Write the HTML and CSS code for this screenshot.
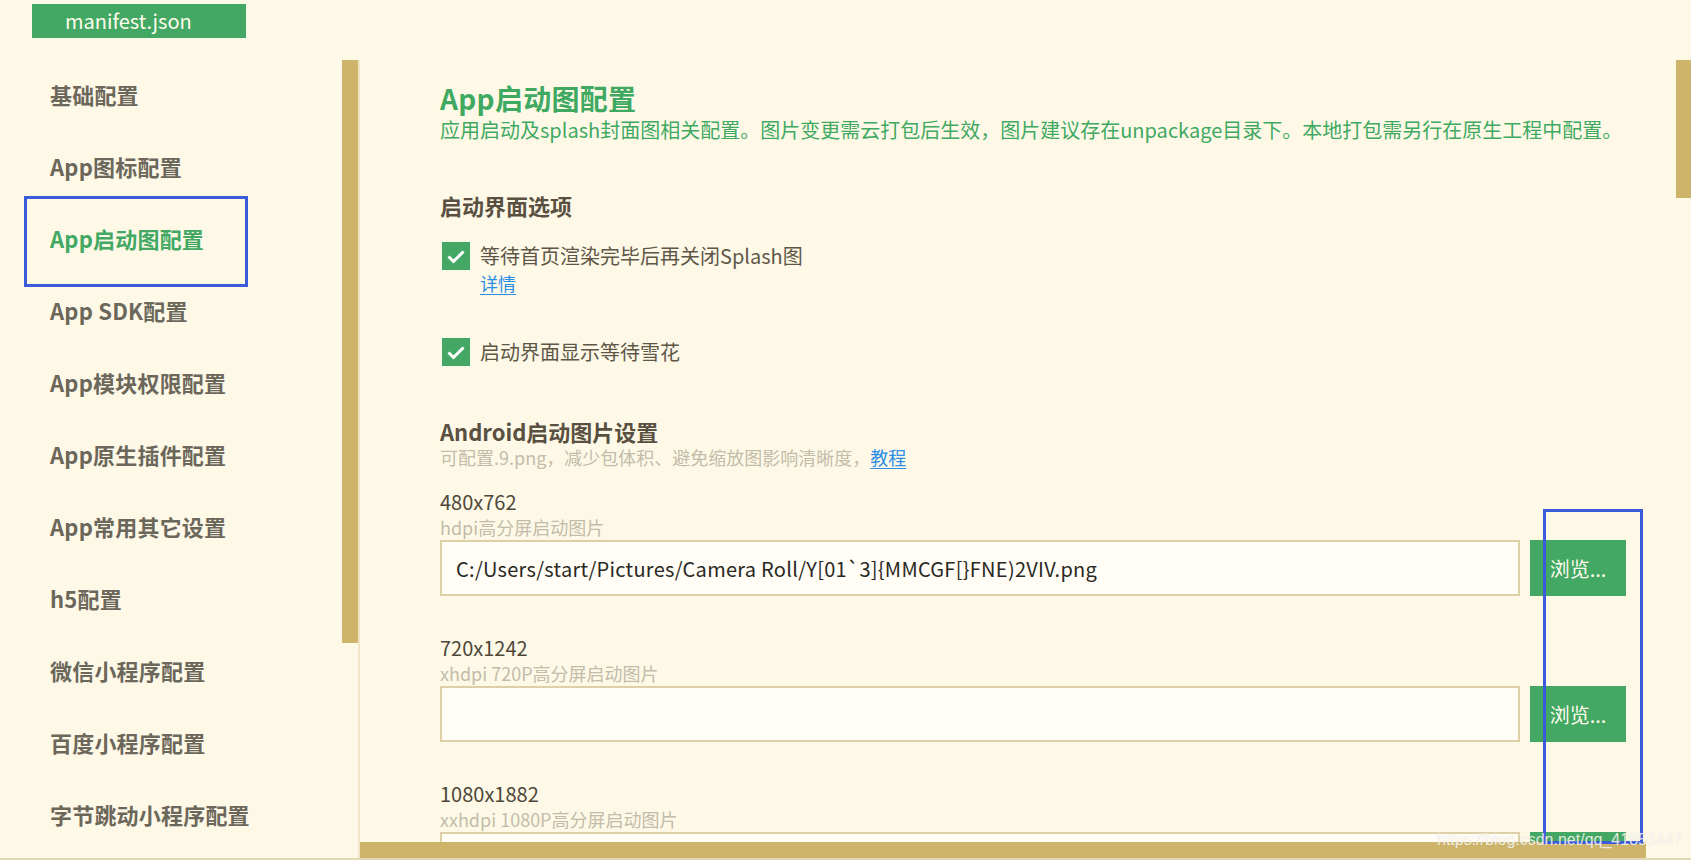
FILE: index.html
```html
<!DOCTYPE html>
<html lang="zh-CN">
<head>
<meta charset="utf-8">
<title>manifest.json - App启动图配置</title>
<link rel="stylesheet" href="styles.css">
</head>
<body>
<div class="app">
  <header class="tabs">
    <div class="tab">manifest.json</div>
  </header>
  <div class="workspace">
    <aside class="sidebar">
      <nav class="nav">
        <a class="nav-item">基础配置</a>
        <a class="nav-item">App图标配置</a>
        <a class="nav-item active">App启动图配置</a>
        <a class="nav-item">App SDK配置</a>
        <a class="nav-item">App模块权限配置</a>
        <a class="nav-item">App原生插件配置</a>
        <a class="nav-item">App常用其它设置</a>
        <a class="nav-item">h5配置</a>
        <a class="nav-item">微信小程序配置</a>
        <a class="nav-item">百度小程序配置</a>
        <a class="nav-item">字节跳动小程序配置</a>
      </nav>
      <div class="vscroll side-scroll"><div class="thumb"></div></div>
      <div class="annot annot-nav"></div>
    </aside>
    <section class="main">
      <div class="main-body">
        <div class="content">
          <h1 class="page-title">App启动图配置</h1>
          <p class="page-desc">应用启动及splash封面图相关配置。图片变更需云打包后生效，图片建议存在unpackage目录下。本地打包需另行在原生工程中配置。</p>

          <h2 class="section-title first">启动界面选项</h2>
          <div class="option">
            <span class="checkbox"><svg viewBox="0 0 28 28" width="28" height="28"><path d="M6.5 14.5 L11.5 19.5 L21.5 9.5" fill="none" stroke="#fff" stroke-width="3"/></svg></span>
            <span class="option-label">等待首页渲染完毕后再关闭Splash图</span>
          </div>
          <div class="option-link"><a class="link">详情</a></div>
          <div class="option second">
            <span class="checkbox"><svg viewBox="0 0 28 28" width="28" height="28"><path d="M6.5 14.5 L11.5 19.5 L21.5 9.5" fill="none" stroke="#fff" stroke-width="3"/></svg></span>
            <span class="option-label">启动界面显示等待雪花</span>
          </div>

          <h2 class="section-title android">Android启动图片设置</h2>
          <p class="section-desc">可配置.9.png，减少包体积、避免缩放图影响清晰度，<a class="link">教程</a></p>

          <div class="field">
            <div class="field-label">480x762</div>
            <div class="field-hint">hdpi高分屏启动图片</div>
            <div class="field-row">
              <input class="path-input" type="text" readonly value="C:/Users/start/Pictures/Camera Roll/Y[01`3]{MMCGF[}FNE)2VIV.png">
              <button class="browse">浏览...</button>
            </div>
          </div>
          <div class="field">
            <div class="field-label">720x1242</div>
            <div class="field-hint">xhdpi 720P高分屏启动图片</div>
            <div class="field-row">
              <input class="path-input" type="text" readonly value="">
              <button class="browse">浏览...</button>
            </div>
          </div>
          <div class="field">
            <div class="field-label">1080x1882</div>
            <div class="field-hint">xxhdpi 1080P高分屏启动图片</div>
            <div class="field-row">
              <input class="path-input" type="text" readonly value="">
              <button class="browse" aria-label="浏览..."></button>
            </div>
          </div>
        </div>
        <div class="vscroll main-scroll"><div class="thumb"></div></div>
      </div>
      <div class="hscroll"><div class="thumb"></div></div>
    </section>
  </div>
  <div class="bottom-line"></div>
  <div class="annot annot-btn"></div>
  <div class="watermark">https://blog.csdn.net/qq_41853447</div>
</div>
</body>
</html>
```
FILE: styles.css
```css
* { box-sizing: border-box; }

html, body {
  margin: 0;
  padding: 0;
  background: #fef9e7;
}

body {
  font-family: "Noto Sans CJK SC", sans-serif;
  color: #5e5747;
}

.app {
  position: relative;
  width: 1691px;
  height: 860px;
  overflow: hidden;
  display: flex;
  flex-direction: column;
  background: #fef9e7;
}

/* ---------- tab bar ---------- */
.tabs {
  height: 60px;
  padding: 4px 0 0 32px;
  flex: none;
}

.tab {
  width: 214px;
  height: 34px;
  line-height: 34px;
  padding-left: 33px;
  background: #42a863;
  color: #fffbec;
  font-size: 20px;
}

/* ---------- workspace ---------- */
.workspace {
  flex: 1;
  display: flex;
  min-height: 0;
}

.sidebar {
  position: relative;
  width: 360px;
  flex: none;
  display: flex;
  border-right: 2px solid #efe6c6;
}

.nav {
  flex: 1;
  display: flex;
  flex-direction: column;
  padding-left: 50px;
}

.nav-item {
  height: 72px;
  line-height: 68px;
  font-size: 22px;
  font-weight: 700;
  color: #6c675b;
  white-space: nowrap;
  letter-spacing: 0.2px;
}

.nav-item.active {
  color: #42a863;
}

.vscroll {
  flex: none;
}

.vscroll .thumb {
  background: #cdb46a;
}

.side-scroll {
  width: 16px;
}

.side-scroll .thumb {
  height: 583px;
}

.main {
  flex: 1;
  display: flex;
  flex-direction: column;
  min-width: 0;
}

.main-body {
  flex: 1;
  display: flex;
  min-height: 0;
}

.content {
  flex: 1;
  min-width: 0;
  overflow: hidden;
  padding: 20px 50px 0 80px;
}

.main-scroll {
  width: 15px;
}

.main-scroll .thumb {
  height: 138px;
}

.hscroll {
  height: 16px;
  flex: none;
}

.hscroll .thumb {
  width: 1286px;
  height: 16px;
  background: #cdb46a;
}

.bottom-line {
  height: 2px;
  flex: none;
  background: #e3d8b2;
}

/* ---------- content ---------- */
.page-title {
  margin: 0;
  font-size: 28px;
  line-height: 36px;
  font-weight: 700;
  color: #3fa962;
  letter-spacing: 0.3px;
}

.page-desc {
  margin: 0;
  font-size: 20px;
  line-height: 28px;
  color: #3fa962;
  white-space: nowrap;
}

.section-title {
  margin: 0;
  font-size: 22px;
  font-weight: 700;
  color: #5a5041;
}

.section-title.first {
  margin-top: 46px;
  line-height: 30px;
}

.section-title.android {
  margin-top: 51px;
  line-height: 28px;
}

.option {
  display: flex;
  align-items: center;
  gap: 10px;
  margin-top: 22px;
  padding-left: 2px;
  height: 28px;
}

.option.second {
  margin-top: 42px;
}

.checkbox {
  width: 28px;
  height: 28px;
  background: #42a863;
  display: block;
  flex: none;
}

.checkbox svg {
  display: block;
}

.option-label {
  font-size: 20px;
  line-height: 28px;
  color: #5e5747;
}

.option-link {
  padding-left: 40px;
  font-size: 18px;
  line-height: 26px;
}

.link {
  color: #2b8de6;
  text-decoration: underline;
  text-underline-offset: 3px;
}

.section-desc {
  margin: 0;
  font-size: 18px;
  line-height: 24px;
  color: #c3bca9;
}

.field {
  margin-top: 39px;
}

.section-desc + .field {
  margin-top: 20px;
}

.field-label {
  font-size: 20px;
  line-height: 26px;
  color: #4e4739;
}

.field-hint {
  font-size: 18px;
  line-height: 25px;
  color: #c3bca9;
  white-space: nowrap;
}

.field-row {
  display: flex;
  gap: 10px;
  height: 56px;
}

.path-input {
  flex: 1;
  min-width: 0;
  height: 56px;
  margin: 0;
  padding: 0 14px;
  border: 2px solid #ddd0a6;
  background: #fffdf5;
  font-family: "Noto Sans CJK SC", sans-serif;
  font-size: 20px;
  letter-spacing: 0.28px;
  color: #2a2824;
  outline: none;
}

.browse {
  width: 96px;
  height: 56px;
  flex: none;
  margin: 0;
  padding: 0;
  border: none;
  background: #42a863;
  color: #fffbec;
  font-family: "Noto Sans CJK SC", sans-serif;
  font-size: 20px;
}

/* ---------- overlays ---------- */
.annot {
  position: absolute;
  border: 3px solid #3b5bdb;
  pointer-events: none;
}

.annot-nav {
  left: 24px;
  top: 136px;
  width: 224px;
  height: 91px;
}

.annot-btn {
  left: 1543px;
  top: 509px;
  width: 100px;
  height: 335px;
}

.watermark {
  position: absolute;
  left: 1437px;
  top: 828px;
  font-family: "Liberation Sans", Arial, sans-serif;
  font-size: 16px;
  line-height: 24px;
  color: rgba(255, 255, 255, 0.8);
  text-shadow: 0 0 1px rgba(160, 150, 120, 0.35);
  white-space: nowrap;
  pointer-events: none;
}
```
